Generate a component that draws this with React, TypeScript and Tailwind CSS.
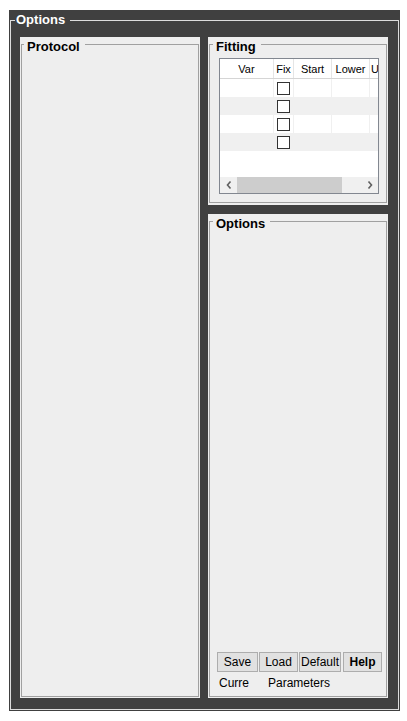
const font = { fontFamily: '"Liberation Sans", Arial, sans-serif' };

const rows = [0, 1, 2, 3];

function Legend({ children, className }: { children: React.ReactNode; className: string }) {
  return <legend className={`h-[14px] text-[13px] font-bold leading-[20px] ${className}`}>{children}</legend>;
}

function Chevron({ dir }: { dir: "left" | "right" }) {
  return (
    <svg width="6" height="8" viewBox="0 0 6 8" className="block">
      <polyline
        points={dir === "left" ? "4.5,0.5 1.5,4 4.5,7.5" : "1.5,0.5 4.5,4 1.5,7.5"}
        fill="none"
        stroke="#606060"
        strokeWidth="1.6"
      />
    </svg>
  );
}

function FitTable() {
  return (
    <div className="ml-[9px] mt-[7px] h-[136px] w-[160px] overflow-hidden border border-[#828790] bg-white">
      <div className="flex h-[20px] border-b border-[#d5d5d5] text-[11px] leading-[21px] text-black">
        <div className="w-[54px] border-r border-[#e5e5e5] text-center">Var</div>
        <div className="w-[20px] border-r border-[#e5e5e5] text-center">Fix</div>
        <div className="w-[38px] border-r border-[#e5e5e5] text-center">Start</div>
        <div className="w-[38px] border-r border-[#e5e5e5] text-center">Lower</div>
        <div className="w-[8px] pl-[1px]">U</div>
      </div>
      {rows.map((r) => (
        <div key={r} className={`flex h-[18px] ${r % 2 === 1 ? "bg-[#f0f0f0]" : "bg-white"}`}>
          <div className="w-[54px] border-r border-[#f0f0f0]" />
          <div className="flex w-[20px] items-center justify-center border-r border-[#f0f0f0]">
            <div className="h-[13px] w-[13px] border border-[#333333] bg-white" />
          </div>
          <div className="w-[38px] border-r border-[#f0f0f0]" />
          <div className="w-[38px] border-r border-[#f0f0f0]" />
          <div className="w-[8px]" />
        </div>
      ))}
      <div className="h-[26px]" />
      <div className="flex h-[16px] items-center bg-[#f0f0f0]">
        <div className="flex w-[17px] justify-center">
          <Chevron dir="left" />
        </div>
        <div className="h-[16px] w-[105px] bg-[#cdcdcd]" />
        <div className="flex-1" />
        <div className="flex w-[17px] justify-center">
          <Chevron dir="right" />
        </div>
      </div>
    </div>
  );
}

export default function App() {
  return (
    <div className="min-h-screen bg-white pl-[9px] pt-[10px]" style={font}>
      <div className="h-[701px] w-[391px] bg-[#404040] pl-[1px] pt-[2px]">
        <fieldset className="h-[698px] w-[389px] border border-[#dcdcdc] p-0">
          <legend className="ml-[4px] pl-[1px] pr-[5px] text-[13px] font-bold leading-[16px] text-white">Options</legend>
          <div className="ml-[9px] mt-[9px] flex gap-[8px]">
            <div className="h-[661px] w-[180px] bg-[#eeeeee] px-[1px] pb-[1px]">
              <fieldset className="h-full border border-[#a0a0a0] p-0">
                <Legend className="ml-[2px] pl-[3px] pr-[5px] text-black">Protocol</Legend>
              </fieldset>
            </div>
            <div className="flex w-[180px] flex-col gap-[9px]">
              <div className="h-[168px] bg-[#eeeeee] px-[1px] pb-[2px]">
                <fieldset className="h-full border border-[#a0a0a0] p-0">
                  <Legend className="ml-[3px] pl-[3px] pr-[5px] text-black">Fitting</Legend>
                  <FitTable />
                </fieldset>
              </div>
              <div className="h-[484px] bg-[#eeeeee] px-[1px] pb-[1px]">
                <fieldset className="h-full border border-[#a0a0a0] p-0">
                  <Legend className="ml-[3px] pl-[3px] pr-[5px] text-black">Options</Legend>
                  <div className="ml-[7px] mt-[424px] flex text-[12px] leading-[18px] text-black">
                    <button className="h-[20px] w-[41px] border border-[#adadad] bg-[#e1e1e1]">Save</button>
                    <button className="ml-[1px] h-[20px] w-[39px] border border-[#adadad] bg-[#e1e1e1]">Load</button>
                    <button className="ml-[1px] h-[20px] w-[42px] border border-[#adadad] bg-[#e1e1e1]">Default</button>
                    <button className="ml-[2px] h-[20px] w-[39px] border border-[#adadad] bg-[#e1e1e1] font-bold">Help</button>
                  </div>
                  <div className="ml-[9px] mt-[3px] flex text-[12px] leading-[16px] text-black">
                    <span className="w-[49px]">Curre</span>
                    <span>Parameters</span>
                  </div>
                </fieldset>
              </div>
            </div>
          </div>
        </fieldset>
      </div>
    </div>
  );
}
